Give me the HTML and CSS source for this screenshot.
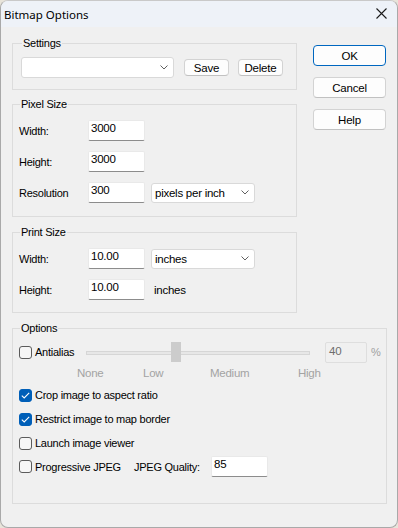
FILE: index.html
```html
<!DOCTYPE html>
<html>
<head>
<meta charset="utf-8">
<title>Bitmap Options</title>
<link rel="stylesheet" href="styles.css">
</head>
<body>
<div class="window">
  <div class="titlebar">
    <span class="title">Bitmap Options</span>
    <svg class="close" width="11" height="11" viewBox="0 0 11 11"><path d="M0.5 0.5 L10.5 10.5 M10.5 0.5 L0.5 10.5" stroke="#1b1b1b" stroke-width="1.1" fill="none"/></svg>
  </div>
  <div class="body">
    <div class="top">
      <div class="groups">
        <fieldset class="group settings">
          <legend>Settings</legend>
          <div class="row">
            <div class="combo combo-settings">
              <span class="combo-text"></span>
              <svg class="chev" width="8" height="5" viewBox="0 0 8 5"><path d="M0.5 0.5 L4 4 L7.5 0.5" stroke="#606060" fill="none" stroke-width="1"/></svg>
            </div>
            <button class="btn btn-small btn-save">Save</button>
            <button class="btn btn-small btn-delete">Delete</button>
          </div>
        </fieldset>

        <fieldset class="group pixel">
          <legend>Pixel Size</legend>
          <div class="rows">
            <div class="row">
              <span class="lbl">Width:</span>
              <div class="edit">3000</div>
            </div>
            <div class="row">
              <span class="lbl">Height:</span>
              <div class="edit">3000</div>
            </div>
            <div class="row">
              <span class="lbl">Resolution</span>
              <div class="edit">300</div>
              <div class="combo combo-unit">
                <span class="combo-text">pixels per inch</span>
                <svg class="chev" width="8" height="5" viewBox="0 0 8 5"><path d="M0.5 0.5 L4 4 L7.5 0.5" stroke="#606060" fill="none" stroke-width="1"/></svg>
              </div>
            </div>
          </div>
        </fieldset>

        <fieldset class="group print">
          <legend>Print Size</legend>
          <div class="rows">
            <div class="row">
              <span class="lbl">Width:</span>
              <div class="edit">10.00</div>
              <div class="combo combo-unit">
                <span class="combo-text">inches</span>
                <svg class="chev" width="8" height="5" viewBox="0 0 8 5"><path d="M0.5 0.5 L4 4 L7.5 0.5" stroke="#606060" fill="none" stroke-width="1"/></svg>
              </div>
            </div>
            <div class="row">
              <span class="lbl">Height:</span>
              <div class="edit">10.00</div>
              <span class="unit-text">inches</span>
            </div>
          </div>
        </fieldset>
      </div>

      <div class="buttons">
        <button class="btn btn-main btn-default">OK</button>
        <button class="btn btn-main">Cancel</button>
        <button class="btn btn-main">Help</button>
      </div>
    </div>

    <fieldset class="group options">
      <legend>Options</legend>
      <div class="opt-rows">
        <div class="orow orow-anti">
          <label class="check check-anti"><span class="box"></span><span>Antialias</span></label>
          <div class="slider">
            <div class="track"></div>
            <div class="thumb"></div>
          </div>
          <div class="edit edit-disabled">40</div>
          <span class="pct">%</span>
        </div>
        <div class="ticks">
          <span>None</span><span>Low</span><span>Medium</span><span>High</span>
        </div>
        <div class="orow">
          <label class="check"><span class="box checked"><svg width="9" height="7" viewBox="0 0 9 7"><path d="M0.8 3.6 L3.2 5.9 L8.2 0.9" stroke="#ffffff" stroke-width="1.1" fill="none"/></svg></span><span>Crop image to aspect ratio</span></label>
        </div>
        <div class="orow">
          <label class="check"><span class="box checked"><svg width="9" height="7" viewBox="0 0 9 7"><path d="M0.8 3.6 L3.2 5.9 L8.2 0.9" stroke="#ffffff" stroke-width="1.1" fill="none"/></svg></span><span>Restrict image to map border</span></label>
        </div>
        <div class="orow">
          <label class="check"><span class="box"></span><span>Launch image viewer</span></label>
        </div>
        <div class="orow orow-last">
          <label class="check check-prog"><span class="box"></span><span>Progressive JPEG</span></label>
          <span class="jq">JPEG Quality:</span>
          <div class="edit">85</div>
        </div>
      </div>
    </fieldset>
  </div>
</div>
</body>
</html>
```

FILE: styles.css
```css
* { box-sizing: border-box; }
html, body { margin: 0; padding: 0; }
body {
  background: #e8e4da;
  font-family: "Liberation Sans", Arial, sans-serif;
  font-size: 11px;
  letter-spacing: -0.25px;
  color: #000;
}
.window {
  width: 398px;
  height: 528px;
  background: #f0f0f0;
  border: 1px solid #a9a9a9;
  border-top-color: #c9c9c9;
  border-radius: 8px;
  overflow: hidden;
  display: flex;
  flex-direction: column;
}
.titlebar {
  height: 26px;
  flex: none;
  background: #eef2f8;
  display: flex;
  align-items: center;
  justify-content: space-between;
  padding: 0 10px 0 3px;
}
.title {
  font-family: "Noto Sans", "Liberation Sans", sans-serif;
  font-size: 11.5px;
  letter-spacing: 0;
  color: #000;
}
.close { display: block; margin-top: -1px; }

.body { padding: 9px 0 0 11px; }
.top { display: flex; gap: 16px; }
.groups { width: 285px; display: flex; flex-direction: column; }

fieldset.group {
  margin: 0;
  border: 1px solid #dcdcdc;
  min-width: 0;
}
fieldset.group legend {
  padding: 0 1px;
  margin-left: 1px;
  line-height: 15px;
  height: 15px;
}
.settings { padding: 6px 0 11px 8px; }
.pixel { margin-top: 7px !important; padding: 8px 0 13px 6px; }
.print { margin-top: 8px !important; padding: 8px 0 12px 6px; }
.settings legend { margin-left: 1px; }

.row { display: flex; align-items: center; height: 21px; }
.rows { display: flex; flex-direction: column; gap: 10px; }
.lbl { width: 69px; flex: none; }

.edit {
  width: 57px;
  height: 21px;
  flex: none;
  background: #fff;
  border: 1px solid #e9e9e9;
  border-bottom-color: #8c8c8c;
  border-radius: 2px;
  padding: 0 2px;
  line-height: 15px;
  font-size: 11.5px;
}
.combo {
  display: flex;
  align-items: center;
  justify-content: space-between;
  background: #fff;
  border: 1px solid #d9d9d9;
  border-radius: 3px;
  flex: none;
}
.combo-settings { width: 153px; height: 21px; padding: 0 5px 0 4px; }
.combo-unit { width: 104px; height: 20px; margin-left: 6px; padding: 0 5px 0 3px; font-size: 11.5px; }
.chev { display: block; flex: none; }
.unit-text { margin-left: 9px; font-size: 11.5px; }

.btn {
  font-family: "Liberation Sans", Arial, sans-serif;
  font-size: 11.5px;
  letter-spacing: -0.2px;
  color: #000;
  background: #fdfdfd;
  border: 1px solid #d3d3d3;
  border-bottom-color: #c1c1c1;
  border-radius: 4px;
  padding: 0;
  margin: 0;
  display: flex;
  align-items: center;
  justify-content: center;
}
.btn-small { width: 45px; height: 17px; }
.btn-save { margin-left: 10px; }
.btn-delete { margin-left: 9px; }

.buttons {
  width: 73px;
  padding-top: 9px;
  display: flex;
  flex-direction: column;
  gap: 11px;
}
.btn-main { width: 73px; height: 21px; }
.btn-default { border: 1px solid #0067c0; }

.options {
  width: 375px;
  margin-top: 8px !important;
  padding: 5px 0 25px 6px;
}
.opt-rows { display: flex; flex-direction: column; }
.orow { display: flex; align-items: center; height: 24px; }
.orow-anti { height: 22px; }
.orow-last { height: 23px; }

.check { display: flex; align-items: center; gap: 3px; flex: none; }
.check-anti { width: 67px; }
.check-prog { width: 115px; }
.box {
  width: 13px;
  height: 13px;
  border: 1px solid #5b5b5b;
  border-radius: 3px;
  background: #f6f6f6;
  display: flex;
  align-items: center;
  justify-content: center;
  flex: none;
}
.box.checked { background: #005fb8; border-color: #005fb8; }
.box svg { display: block; }

.slider { position: relative; width: 224px; height: 22px; flex: none; display: flex; align-items: center; }
.track {
  width: 224px;
  height: 4px;
  background: #e7e7e7;
  border: 1px solid #d6d6d6;
  margin-top: 1px;
}
.thumb {
  position: absolute;
  left: 85px;
  top: 1px;
  width: 10px;
  height: 20px;
  background: #cccccc;
}
.edit-disabled {
  width: 42px;
  margin-left: 15px;
  background: #f0f0f0;
  border: 1px solid #dedede;
  color: #6d6d6d;
  padding-left: 3px;
  line-height: 17px;
}
.pct { margin-left: 4px; color: #a0a0a0; }

.ticks {
  height: 20px;
  display: grid;
  grid-template-columns: 66px 67px 88px auto;
  align-items: center;
  padding-left: 58px;
  color: #a3a3a3;
  font-size: 11.5px;
}
.jq { width: 77px; flex: none; }
```
